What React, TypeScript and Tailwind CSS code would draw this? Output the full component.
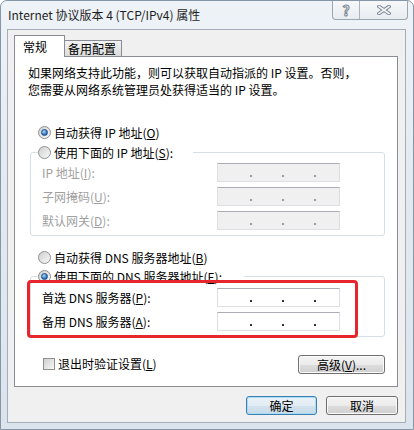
import React from 'react';

const font = "font-['Noto_Sans_CJK_SC','Noto_Sans',sans-serif]";

function Radio({ on }: { on?: boolean }) {
  return (
    <span className="flex h-[13px] w-[13px] shrink-0 items-center justify-center rounded-full border border-[#8e8f8f] bg-[linear-gradient(135deg,#cfcfcf,#f9f9f9)]">
      {on && (
        <span className="h-[7px] w-[7px] rounded-full border border-[#1c4e8c] bg-[radial-gradient(circle_at_35%_30%,#a8d8f8,#2a6db5_70%)]" />
      )}
    </span>
  );
}

function IpBox({ disabled }: { disabled?: boolean }) {
  return (
    <div
      className={`flex h-[19px] w-[123px] items-center gap-[30px] border border-[#dcdfe3] border-t-[#abadb3] pl-[32px] pt-[6px] ${
        disabled ? 'bg-[#f0f0f0]' : 'bg-white'
      }`}
    >
      {[0, 1, 2].map((i) => (
        <span key={i} className={`h-[2px] w-[2px] ${disabled ? 'bg-[#9a9a9a]' : 'bg-[#333]'}`} />
      ))}
    </div>
  );
}

function Field({ label, disabled }: { label: React.ReactNode; disabled?: boolean }) {
  return (
    <div className="flex items-center">
      <span className={`w-[175px] text-[12px] leading-[15px] ${disabled ? 'text-[#a0a0a0]' : 'text-black'}`}>{label}</span>
      <IpBox disabled={disabled} />
    </div>
  );
}

function Btn({ children, primary, w }: { children: React.ReactNode; primary?: boolean; w: string }) {
  return (
    <button
      className={`flex h-[19px] ${w} items-center justify-center rounded-[3px] border text-[12px] leading-none text-black ${
        primary
          ? 'border-[#3c7fb1] bg-[linear-gradient(#eaf2f8_0%,#e2ecf3_50%,#d3e3ee_50%,#c8dbe8_100%)] shadow-[inset_0_0_0_1px_#a8dcf5]'
          : 'border-[#707070] bg-[linear-gradient(#f4f4f4_0%,#ebebeb_50%,#dddddd_50%,#d0d0d0_100%)] shadow-[inset_0_0_0_1px_#fafafa]'
      }`}
    >
      {children}
    </button>
  );
}

export default function App() {
  return (
    <div
      className={`${font} h-[430px] w-[414px] overflow-hidden rounded-t-[7px] border border-[#8796a6] bg-[linear-gradient(180deg,#eef3f8_0%,#e3eaf1_40%,#dbe4ed_100%)] text-black`}
    >
      {/* title bar */}
      <div className="flex h-[28px] items-start justify-between">
        <span className="pl-[7px] pt-[6px] text-[12px] leading-[16px] text-[#1e1e1e]">Internet 协议版本 4 (TCP/IPv4) 属性</span>
        <div className="mr-[5px] flex h-[19px] rounded-b-[4px] border border-t-0 border-[#9aa6b2] bg-[linear-gradient(#f6f8fa,#e8edf2)]">
          <div className="flex w-[27px] items-center justify-center border-r border-[#a9b3bd] text-[14px] font-bold leading-none text-[#f3f5f7] [-webkit-text-stroke:1px_#7b8793]">
            ?
          </div>
          <div className="flex w-[47px] items-center justify-center">
            <svg width="14" height="10" viewBox="0 0 14 10">
              <path d="M2 1.5 L12 8.5 M12 1.5 L2 8.5" stroke="#7b8793" strokeWidth="3.6" strokeLinecap="square" />
              <path d="M2 1.5 L12 8.5 M12 1.5 L2 8.5" stroke="#f4f6f8" strokeWidth="1.6" strokeLinecap="square" />
            </svg>
          </div>
        </div>
      </div>

      {/* client area */}
      <div className="ml-[6px] h-[394px] w-[399px] border border-[#a3aeb9] bg-[#f0f0f0] pl-[6px] pt-[5px]">
        {/* tabs */}
        <div className="flex h-[21px] items-end">
          <div className="relative z-10 -mb-px h-[22px] w-[51px] border border-b-0 border-[#898c95] bg-white pl-[8px] pt-[3px] text-[12px] leading-[15px]">
            常规
          </div>
          <div className="h-[16px] w-[57px] border border-b-0 border-l-0 border-[#898c95] bg-[linear-gradient(#f2f2f2,#dcdcdc)] pl-[3px] text-[12px] leading-[15px]">
            备用配置
          </div>
        </div>

        {/* tab panel */}
        <div className="relative flex h-[331px] w-[384px] flex-col border border-[#898c95] bg-white pt-[7px] text-[12px]">
          <div className="flex flex-col pl-[13px] leading-[17px]">
            <span>如果网络支持此功能，则可以获取自动指派的 IP 设置。否则，</span>
            <span>您需要从网络系统管理员处获得适当的 IP 设置。</span>
          </div>

          <label className="ml-[23px] mt-[27px] flex h-[15px] items-center gap-[3px] leading-[15px]">
            <Radio on />
            <span>
              自动获得 IP 地址(<u>O</u>)
            </span>
          </label>

          <fieldset className="ml-[15px] mt-[4px] w-[355px] rounded-[3px] border border-[#d5dfe5] pb-[5px] pl-[11px]">
            <legend className="ml-[-4px] pr-[20px]">
              <span className="flex h-[16px] items-center gap-[3px] leading-[15px]">
                <Radio />
                <span>
                  使用下面的 IP 地址(<u>S</u>):
                </span>
              </span>
            </legend>
            <div className="mt-[3px] flex flex-col gap-[5px]">
              <Field
                disabled
                label={
                  <>
                    IP 地址(<u>I</u>):
                  </>
                }
              />
              <Field
                disabled
                label={
                  <>
                    子网掩码(<u>U</u>):
                  </>
                }
              />
              <Field
                disabled
                label={
                  <>
                    默认网关(<u>D</u>):
                  </>
                }
              />
            </div>
          </fieldset>

          <label className="ml-[23px] mt-[14px] flex h-[15px] items-center gap-[3px] leading-[15px]">
            <Radio />
            <span>
              自动获得 DNS 服务器地址(<u>B</u>)
            </span>
          </label>

          <fieldset className="ml-[15px] mt-[3px] w-[355px] rounded-[3px] border border-[#d5dfe5] pb-[5px] pl-[11px]">
            <legend className="ml-[-4px] pr-[22px]">
              <span className="flex h-[16px] items-center gap-[3px] leading-[15px]">
                <Radio on />
                <span>
                  使用下面的 DNS 服务器地址(<u>E</u>):
                </span>
              </span>
            </legend>
            <div className="mt-[4px] flex flex-col gap-[5px]">
              <Field
                label={
                  <>
                    首选 DNS 服务器(<u>P</u>):
                  </>
                }
              />
              <Field
                label={
                  <>
                    备用 DNS 服务器(<u>A</u>):
                  </>
                }
              />
            </div>
          </fieldset>

          <div className="ml-[28px] mr-[12px] mt-[18px] flex items-start justify-between">
            <label className="mt-[1px] flex items-center gap-[3px] leading-[15px]">
              <span className="h-[12px] w-[12px] border border-[#8e8f8f] bg-[linear-gradient(135deg,#d0d0d0,#f8f8f8)]" />
              <span>
                退出时验证设置(<u>L</u>)
              </span>
            </label>
            <Btn w="w-[87px]">
              高级(<u>V</u>)...
            </Btn>
          </div>

          {/* highlight */}
          <div className="pointer-events-none absolute left-[12px] top-[223px] h-[58px] w-[331px] rounded-[4px] border-[3px] border-[#e6262c]" />
        </div>

        {/* dialog buttons */}
        <div className="mt-[9px] flex justify-end gap-[9px] pr-[7px]">
          <Btn primary w="w-[71px]">
            确定
          </Btn>
          <Btn w="w-[72px]">取消</Btn>
        </div>
      </div>
    </div>
  );
}
